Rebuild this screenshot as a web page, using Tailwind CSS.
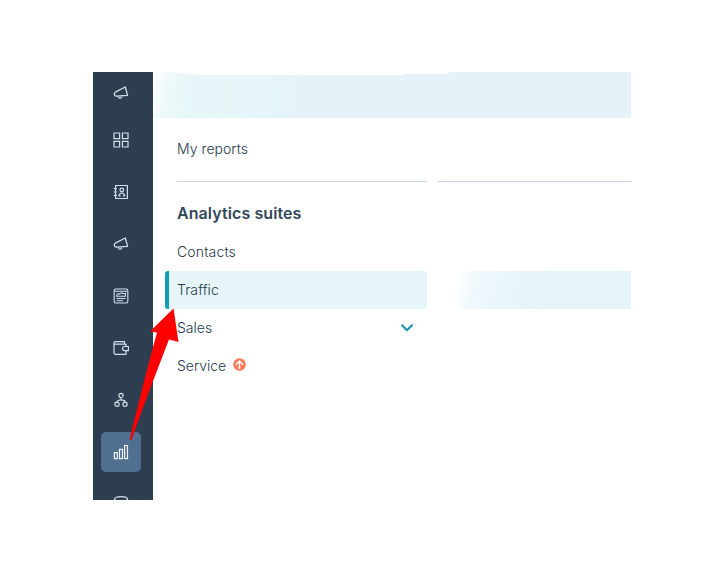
<!DOCTYPE html>
<html lang="en">
<head>
<meta charset="utf-8">
<title>Reports</title>
<script src="https://cdn.jsdelivr.net/npm/@tailwindcss/browser@4"></script>
</head>
<body class="bg-white w-[717px] h-[572px] overflow-hidden pt-[72px] pl-[93px] font-['Inter','Liberation_Sans',sans-serif] text-[#33475b]">
<div class="relative flex w-[538px] h-[428px]">
  <nav class="w-[60px] h-[428px] pr-1 shrink-0 bg-[#2d3e50] overflow-hidden flex flex-col items-center text-[#d3dfeb]">
    <a class="h-[42px] flex items-center shrink-0"><svg class="size-4" viewBox="0 0 16 16" fill="none" stroke="currentColor" stroke-width="1.3" stroke-linejoin="round" stroke-linecap="round"><path d="M12.300 2 14.600 10.300 3.200 11.200C1.200 11.200.6 8.200 2.300 7.200ZM5.200 11.300C5.500 14.300 8.700 14 8.800 11.100"/></svg></a>
    <a class="h-[52px] flex items-center shrink-0"><svg class="size-4" viewBox="0 0 16 16" fill="none" stroke="currentColor" stroke-width="1.2"><path d="M1 1h5.600v5.600H1zM9.400 1H15v5.600H9.400zM1 9.400h5.600V15H1zM9.400 9.400H15V15H9.400z"/></svg></a>
    <a class="h-[52px] flex items-center shrink-0"><svg class="size-4" viewBox="0 0 16 16" fill="none" stroke="currentColor" stroke-width="1.2" stroke-linejoin="round"><path d="M2.600 1.500h11.800v13H2.600zM.7 4.600h3M.7 8h3M.7 11.400h3"/><circle cx="8.800" cy="5.900" r="1.800"/><path d="M7.600 11.900H5.900c-.2-3.600 6-3.600 5.800 0H10"/></svg></a>
    <a class="h-[52px] flex items-center shrink-0"><svg class="size-4" viewBox="0 0 16 16" fill="none" stroke="currentColor" stroke-width="1.3" stroke-linejoin="round" stroke-linecap="round"><path d="M12.300 2 14.600 10.300 3.200 11.200C1.200 11.200.6 8.200 2.300 7.200ZM5.200 11.300C5.500 14.300 8.700 14 8.800 11.100"/></svg></a>
    <a class="h-[52px] flex items-center shrink-0"><svg class="size-4" viewBox="0 0 16 16" fill="none" stroke="currentColor" stroke-width="1.1" stroke-linejoin="round"><rect x="1.200" y="1" width="13.600" height="14" rx="1.400"/><path d="M1.500 3.300h13M3.600 8.200C3.600 6.200 5 5.400 6.300 6.100 7.700 4.600 9 4.600 9.800 5.700L12.500 5.200V8.200ZM3.600 10.500h8.900M3.600 12.700h6.400"/></svg></a>
    <a class="h-[52px] flex items-center shrink-0"><svg class="size-4" viewBox="0 0 16 16" fill="none" stroke="currentColor" stroke-width="1.2" stroke-linejoin="round"><path d="M13 6.200V4.200H2.200C.5 4.200.5 1.700 2.200 1.700H11.500V4M1 3v9.800c0 .9.6 1.500 1.500 1.500H13v-3.200"/><path d="M15.400 6.500h-3.800a2.100 2.100 0 0 0 0 4.200h3.800z"/></svg></a>
    <a class="h-[52px] flex items-center shrink-0"><svg class="size-4" viewBox="0 0 16 16" fill="none" stroke="currentColor" stroke-width="1.200"><circle cx="8" cy="3.400" r="2.100"/><circle cx="4" cy="12.300" r="2.100"/><circle cx="12" cy="12.300" r="2.100"/><path d="M8 5.500v2.400M3.900 10.200c0-3 8.200-3 8.200 0"/></svg></a>
    <a class="my-[6px] size-10 rounded-[5px] bg-[#516f90] flex items-center justify-center shrink-0 text-[#eef4fa]"><svg class="size-4" viewBox="0 0 16 16" fill="none" stroke="currentColor" stroke-width="1.200"><path d="M1.400 8.600h2.900v6H1.400zM6.500 5.400h3v9.200h-3zM11.600 1.500h2.900v13.100h-2.900z"/></svg></a>
    <a class="h-[52px] flex items-center shrink-0"><svg class="size-4" viewBox="0 0 16 16" fill="none" stroke="currentColor" stroke-width="1.200"><ellipse cx="8" cy="3" rx="6.500" ry="2.300"/><path d="M1.500 3v10c0 3 13 3 13 0V3"/></svg></a>
  </nav>
  <main class="flex-1 min-w-0 text-[14px] font-light text-[#253a4e]">
    <div class="relative h-[46px] bg-[linear-gradient(100deg,#fff_0px,#eff9fa_16px,#e6f6f8_42px,#e5f5f9_110px,#e5f3f8_150px)]">
      <svg class="absolute left-0 top-0 w-[300px] h-[4px]" viewBox="0 0 300 4" fill="#fff"><path d="M18 0H296V2H251V3H48Z"/></svg>
    </div>
    <div class="h-[63px] pl-6 pt-[21px] leading-5"><span class="tracking-[0.05px]">My reports</span></div>
    <div class="flex gap-[11px] pl-6"><div class="w-[250px] h-px bg-[#cbd2da]"></div><div class="flex-1 h-px bg-[#c6d1db]"></div></div>
    <h2 class="h-[51px] pl-6 pt-[19px] leading-6 text-[16px] font-semibold text-[#33475b]"><span class="tracking-[0.08px]">Analytics suites</span></h2>
    <div class="h-[38px] pl-6 pb-[2px] flex items-center"><span class="tracking-[0.15px]">Contacts</span></div>
    <div class="flex h-[38px] pl-3">
      <div class="w-[262px] flex items-center bg-[#e5f5f8] rounded-[3px] border-l-4 border-[#139eaf] pl-2 pb-[2px]"><span class="tracking-[0.1px]">Traffic</span></div>
      <div class="ml-[31px] flex-1 bg-[linear-gradient(100deg,#fff_0px,#f0f8fc_19px,#e8f5fb_55px,#e5f4f8_90px)]"></div>
    </div>
    <div class="h-[38px] pl-6 flex items-center"><span class="w-[223px] pb-[2px]">Sales</span><svg class="w-[14px] h-[10px]" viewBox="0 0 14 10" fill="none" stroke="#1695aa" stroke-width="2" stroke-linecap="round" stroke-linejoin="round"><path d="m2 2.200 5 5 5-5"/></svg></div>
    <div class="h-[38px] pl-6 flex items-center"><span class="w-[56px] pb-[2px]">Service</span><svg class="size-[13px] -mt-[3px]" viewBox="0 0 13 13" fill="none"><circle cx="6.500" cy="6.500" r="6.300" fill="#ff7a59"/><path d="M6.500 10.500V3.200M3.300 6.200l3.200-3.100 3.200 3.100" stroke="#fff" stroke-width="1.400" stroke-linecap="round" stroke-linejoin="round"/></svg></div>
  </main>
  <svg class="absolute left-[35px] top-[234px] w-[54px] h-[136px]" viewBox="128 306 54 136" fill="#fe0000"><path d="M173.500 308.500 150 331.500 157 332.500C148 365 138 405 129.700 439.500L131.500 440C143 407 156 373 169 339.500L178.500 342Z"/></svg>
</div>
</body>
</html>
